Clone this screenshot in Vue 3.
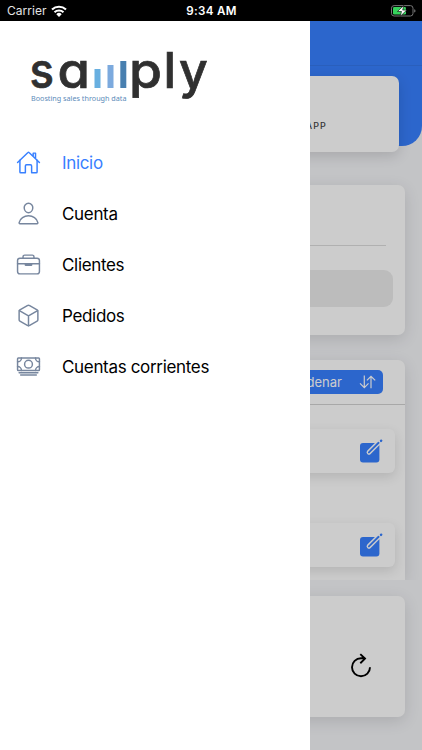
<template>
  <div class="phone">
    <header class="status">
      <div class="status__left">
        <span>Carrier</span>
        <svg class="wifi" viewBox="0 0 16 12">
          <path d="M1 4.5a10.2 10.2 0 0114 0M3.5 7.2a6.6 6.6 0 019 0" fill="none" stroke="#fff" stroke-width="2.1" />
          <path d="M8 12L5.3 9.2a3.8 3.8 0 015.4 0z" fill="#fff" />
        </svg>
      </div>
      <span class="status__time">9:34 AM</span>
      <svg class="battery" viewBox="0 0 25 12">
        <rect x=".5" y=".6" width="21.5" height="10.4" rx="2.6" fill="none" stroke="#777" />
        <rect x="2" y="2.1" width="13" height="7.4" rx="1.3" fill="#35d15b" />
        <path d="M23.2 4.2q1.3.4 1.3 1.7t-1.3 1.7z" fill="#777" />
        <path d="M12.8.4L6.5 6.5h4l-1.3 4.9 6.5-6.3h-4z" fill="#fff" stroke="#000" stroke-width=".6" />
      </svg>
    </header>

    <div class="screen">
      <main class="page">
        <section class="hero">
          <div class="hero__bar"></div>
          <div class="hero__card"><span>APP</span></div>
        </section>

        <section class="card summary">
          <hr class="summary__line">
          <div class="summary__box"></div>
        </section>

        <section class="card list">
          <div class="list__head">
            <button class="sort">
              <span>Ordenar</span>
              <svg viewBox="0 0 18 14">
                <path d="M5.3.6v12M1 8.4l4.3 4.2 4.2-4.2M12 13.2V1.3M7.9 5.4L12 1.3l4.2 4.1" />
              </svg>
            </button>
          </div>
          <div v-for="n in 2" :key="n" class="row">
            <svg class="edit" viewBox="0 0 24 24">
              <rect x="1" y="4" width="19.4" height="19.4" rx="3" fill="#3880ff" />
              <path d="M19.4 3.9L10 13.3" stroke="#fff" stroke-width="4.8" stroke-linecap="round" />
              <path d="M19.6 3.8L9.9 13.4" stroke="#3880ff" stroke-width="1.9" stroke-linecap="round" />
              <path d="M22 1.9l.2-.2" stroke="#3880ff" stroke-width="2.4" stroke-linecap="round" />
            </svg>
          </div>
        </section>

        <footer class="card bottom">
          <svg class="reload" viewBox="0 0 22 26">
            <path d="M20 14.3a9 9 0 11-9-9h4.2M10.3 1.1l4.7 4.5-4.7 4.6" />
          </svg>
        </footer>
      </main>

      <div class="backdrop"></div>

      <aside class="drawer">
        <svg class="logo" viewBox="0 0 180 54" role="img" aria-label="samply">
          <g class="logo__word">
            <text x="-1.5" y="37" textLength="24.5" lengthAdjust="spacingAndGlyphs">s</text>
            <text x="26.5" y="37" textLength="32.5" lengthAdjust="spacingAndGlyphs">a</text>
            <text x="98" y="37" textLength="33" lengthAdjust="spacingAndGlyphs">p</text>
            <text x="132.5" y="37">l</text>
            <text x="148" y="37">y</text>
          </g>
          <rect x="63.5" y="18" width="6" height="19" fill="#68afe0" />
          <rect x="76.5" y="14" width="6" height="23" fill="#7caade" />
          <rect x="89.3" y="10" width="6" height="27" fill="#487faf" />
          <text class="logo__tag" x="0" y="50" textLength="95.5" lengthAdjust="spacingAndGlyphs">Boosting sales through data</text>
        </svg>

        <nav class="menu">
          <a v-for="item in items" :key="item.label" class="menu__item" :class="{ active: item.active }">
            <svg viewBox="0 0 512 512">
              <path v-for="d in item.paths" :key="d" :d="d" />
            </svg>
            <span>{{ item.label }}</span>
          </a>
        </nav>
      </aside>
    </div>
  </div>
</template>

<script setup>
const items = [
  {
    label: 'Inicio',
    active: true,
    paths: [
      'M80 212v236a16 16 0 0016 16h96V328a24 24 0 0124-24h80a24 24 0 0124 24v136h96a16 16 0 0016-16V212',
      'M480 256L266.89 52c-5-5.28-16.69-5.34-21.78 0L32 256M400 179V64h-48v69'
    ]
  },
  {
    label: 'Cuenta',
    paths: [
      'M344 144c-3.92 52.87-44 96-88 96s-84.15-43.12-88-96c-4-55 35-96 88-96s92 42 88 96z',
      'M256 304c-87 0-175.3 48-191.64 138.6C62.39 453.52 68.57 464 80 464h352c11.44 0 17.62-10.48 15.65-21.4C431.3 352 343 304 256 304z'
    ]
  },
  {
    label: 'Clientes',
    paths: [
      'M80 128h352a48 48 0 0148 48v224a48 48 0 01-48 48H80a48 48 0 01-48-48V176a48 48 0 0148-48z',
      'M144 128V96a32 32 0 0132-32h160a32 32 0 0132 32v32M480 240H32M320 240v24a8 8 0 01-8 8H200a8 8 0 01-8-8v-24'
    ]
  },
  {
    label: 'Pedidos',
    paths: [
      'M448 341.37V170.61A32 32 0 00432.11 143l-152-88.46a47.94 47.94 0 00-48.24 0L79.89 143A32 32 0 0064 170.61v170.76A32 32 0 0079.89 369l152 88.46a48 48 0 0048.24 0l152-88.46A32 32 0 00448 341.37z',
      'M69 153.99l187 110 187-110M256 463.99v-200'
    ]
  },
  {
    label: 'Cuentas corrientes',
    paths: [
      'M48 80h416a16 16 0 0116 16v224a16 16 0 01-16 16H48a16 16 0 01-16-16V96a16 16 0 0116-16zM64 384h384M96 432h320',
      'M336 208a80 80 0 11-160 0 80 80 0 01160 0z',
      'M480 160a80 80 0 01-80-80M32 160a80 80 0 0080-80M480 256a80 80 0 00-80 80M32 256a80 80 0 0180 80'
    ]
  }
]
</script>

<style>
body {
  margin: 0;
}
</style>

<style scoped>
.phone {
  width: 422px;
  height: 750px;
  overflow: hidden;
  display: flex;
  flex-direction: column;
  font-family: Inter, "Liberation Sans", sans-serif;
}
.phone * {
  box-sizing: border-box;
}

.status {
  height: 21px;
  flex: none;
  display: grid;
  grid-template-columns: 1fr auto 1fr;
  align-items: center;
  padding: 0 6px 0 7px;
  background: #000;
  color: #fff;
  font-size: 12px;
}
.status__left {
  display: flex;
  align-items: center;
  gap: 4px;
  color: #e4e4e4;
  letter-spacing: .05px;
}
.status__time {
  font-weight: 600;
  font-size: 11.6px;
  letter-spacing: .3px;
}
.wifi {
  width: 16px;
  height: 12px;
}
.battery {
  width: 25px;
  height: 12px;
  justify-self: end;
}

.screen {
  position: relative;
  flex: 1;
  overflow: hidden;
}

.page {
  height: 100%;
  background: #f4f5f8;
}
.hero {
  height: 125px;
  background: #3880ff;
  border-radius: 0 0 20px 0;
}
.hero__bar {
  height: 45px;
  border-bottom: 1px solid #3577ec;
}
.hero__card {
  height: 76px;
  margin: 10px 23px 0;
  padding: 44px 72px 0 0;
  border-radius: 7px;
  background: #fff;
  box-shadow: 0 4px 14px rgba(0, 0, 0, .14);
  text-align: right;
  font-size: 9px;
  font-weight: 500;
  line-height: 12px;
  letter-spacing: 1.1px;
  color: #444;
}

.card {
  margin: 0 17px;
  border-radius: 7px;
  background: #fff;
  box-shadow: 0 4px 16px rgba(0, 0, 0, .12);
}
.summary {
  height: 150px;
  margin-top: 39px;
  padding: 60px 12px 0;
}
.summary__line {
  margin: 0 7px;
  border: 0;
  border-top: 1px solid #dcdcdc;
}
.summary__box {
  height: 37px;
  margin-top: 24px;
  border-radius: 9px;
  background: #ececec;
}

.list {
  height: 220px;
  margin-top: 25px;
  border-radius: 7px 7px 0 0;
  overflow: hidden;
  clip-path: inset(-20px -20px 0 -20px);
}
.list__head {
  height: 45px;
  padding: 10px 22px 0;
  display: flex;
  justify-content: flex-end;
  align-items: flex-start;
  border-bottom: 1px solid #d2d2d2;
}
.sort {
  height: 24px;
  padding: 0 6px 0 12px;
  display: flex;
  align-items: center;
  gap: 17px;
  border: 0;
  border-radius: 5px;
  background: #3880ff;
  color: #fff;
  font: 13px Inter, sans-serif;
}
.sort svg {
  width: 18px;
  height: 14px;
  fill: none;
  stroke: #fff;
  stroke-width: 1.2;
}
.row {
  height: 44px;
  margin: 24px 10px 50px;
  padding: 0 12px;
  display: flex;
  align-items: center;
  justify-content: flex-end;
  border-radius: 6px;
  background: #fff;
  box-shadow: 0 4px 12px rgba(0, 0, 0, .12);
}
.edit {
  width: 24px;
  height: 24px;
  fill: none;
}

.bottom {
  height: 121px;
  margin-top: 16px;
  padding: 57px 33px 0;
  display: flex;
  justify-content: flex-end;
}
.reload {
  width: 22px;
  height: 26px;
  fill: none;
  stroke: #000;
  stroke-width: 1.9;
}

.backdrop {
  position: absolute;
  inset: 0;
  background: rgba(0, 0, 0, .2);
}

.drawer {
  position: absolute;
  inset: 0 auto 0 0;
  width: 310px;
  padding: 30px 0 0 17px;
  background: #fff;
}
.logo {
  display: block;
  width: 180px;
  height: 54px;
  margin-left: 14px;
  overflow: visible;
}
.logo__word {
  font: 500 50px Inter, sans-serif;
  font-feature-settings: "cv11";
  fill: #303030;
  stroke: #303030;
  stroke-width: .7;
}
.logo__tag {
  font: 7.2px "Noto Sans", sans-serif;
  fill: #5b8bb9;
}

.menu {
  margin: 32px 0 0 -1px;
}
.menu__item {
  height: 51px;
  display: flex;
  align-items: center;
  gap: 21px;
  color: #000;
  font-size: 17px;
  letter-spacing: -.33px;
}
.menu__item svg {
  width: 25px;
  height: 25px;
  fill: none;
  stroke: #77869e;
  stroke-width: 30;
  stroke-linecap: round;
  stroke-linejoin: round;
}
.menu__item.active {
  color: #3880ff;
}
.menu__item.active svg {
  stroke: #3880ff;
}
</style>
